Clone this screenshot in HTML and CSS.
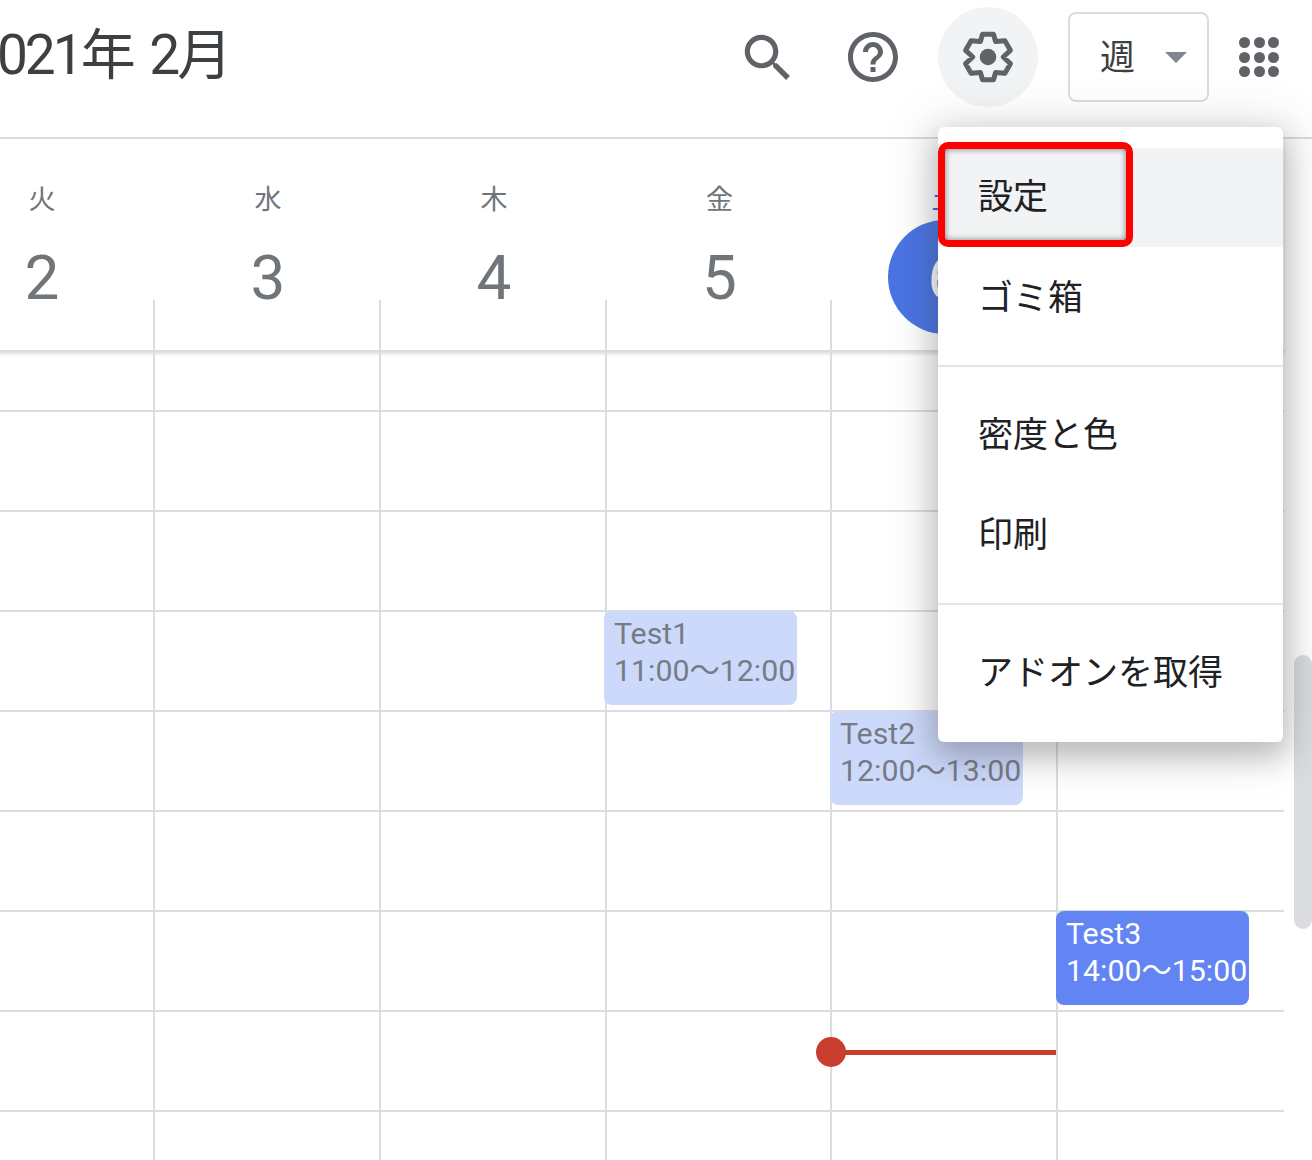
FILE: index.html
```html
<!DOCTYPE html>
<html lang="ja">
<head>
<meta charset="utf-8">
<title>カレンダー</title>
<link rel="stylesheet" href="styles.css">
</head>
<body>
<div class="page">
  <header class="topbar">
    <h1 class="title">2021年 2月</h1>
    <div class="tools">
      <button class="icon-btn"><svg class="ic-search" viewBox="0 0 24 24"><path d="M15.5 14h-.79l-.28-.27C15.41 12.59 16 11.11 16 9.5 16 5.91 13.09 3 9.5 3S3 5.91 3 9.5 5.91 16 9.5 16c1.61 0 3.09-.59 4.23-1.57l.27.28v.79l5 4.99L20.49 19l-4.99-5zm-6 0C7.01 14 5 11.99 5 9.5S7.01 5 9.5 5 14 7.01 14 9.5 11.99 14 9.5 14z"/></svg></button>
      <button class="icon-btn help"><svg class="ic-help" viewBox="0 0 24 24"><path d="M11 18h2v-2h-2v2zm1-16C6.48 2 2 6.48 2 12s4.48 10 10 10 10-4.48 10-10S17.52 2 12 2zm0 18c-4.41 0-8-3.59-8-8s3.59-8 8-8 8 3.59 8 8-3.59 8-8 8zm0-14c-2.21 0-4 1.79-4 4h2c0-1.1.9-2 2-2s2 .9 2 2c0 2-3 1.75-3 5h2c0-2.25 3-2.5 3-5 0-2.21-1.79-4-4-4z"/></svg></button>
      <button class="icon-btn gear"><svg class="ic-gear" viewBox="-30 -30 60 60"><path class="gear-ring" d="M-5.5 -22.7L5.5 -22.7L7.6 -15.4L16.9 -16.3L22.4 -6.7L15.2 0L22.4 6.7L16.9 16.3L7.6 15.4L5.5 22.7L-5.5 22.7L-7.6 15.4L-16.9 16.3L-22.4 6.7L-15.2 0L-22.4 -6.7L-16.9 -16.3L-7.6 -15.4Z"/><circle class="gear-dot" cx="0" cy="0" r="8.3"/></svg></button>
      <button class="view-btn"><span class="view-label">週</span><span class="caret"></span></button>
      <button class="icon-btn apps"><span class="dots"><i></i><i></i><i></i><i></i><i></i><i></i><i></i><i></i><i></i></span></button>
    </div>
  </header>

  <section class="week-head">
    <div class="day"><span class="dow">火</span><span class="num">2</span></div>
    <div class="day"><span class="dow">水</span><span class="num">3</span></div>
    <div class="day"><span class="dow">木</span><span class="num">4</span></div>
    <div class="day"><span class="dow">金</span><span class="num">5</span></div>
    <div class="day today"><span class="dow">土</span><span class="num">6</span></div>
    <div class="day last"><span class="dow">日</span><span class="num">7</span></div>
  </section>

  <section class="week-grid">
    <div class="cell"></div><div class="cell"></div><div class="cell"></div><div class="cell"></div><div class="cell"></div><div class="cell last"></div>
    <div class="cell"></div><div class="cell"></div><div class="cell"></div><div class="cell"></div><div class="cell"></div><div class="cell last"></div>
    <div class="cell"></div><div class="cell"></div><div class="cell"></div><div class="cell"></div><div class="cell"></div><div class="cell last"></div>
    <div class="cell"></div><div class="cell"></div><div class="cell"></div><div class="cell"><div class="event pale nudge">Test1<br>11:00〜12:00</div></div><div class="cell"></div><div class="cell last"></div>
    <div class="cell"></div><div class="cell"></div><div class="cell"></div><div class="cell"></div><div class="cell"><div class="event pale">Test2<br>12:00〜13:00</div></div><div class="cell last"></div>
    <div class="cell"></div><div class="cell"></div><div class="cell"></div><div class="cell"></div><div class="cell"></div><div class="cell last"></div>
    <div class="cell"></div><div class="cell"></div><div class="cell"></div><div class="cell"></div><div class="cell"></div><div class="cell last"><div class="event solid">Test3<br>14:00〜15:00</div></div>
    <div class="cell"></div><div class="cell"></div><div class="cell"></div><div class="cell"></div><div class="cell"><div class="now"></div></div><div class="cell last"></div>
    <div class="cell"></div><div class="cell"></div><div class="cell"></div><div class="cell"></div><div class="cell"></div><div class="cell last"></div>
  </section>

  <div class="scroll-thumb"></div>

  <nav class="menu">
    <div class="menu-group">
      <div class="menu-item hover">設定</div>
      <div class="menu-item">ゴミ箱</div>
    </div>
    <div class="menu-group">
      <div class="menu-item">密度と色</div>
      <div class="menu-item">印刷</div>
    </div>
    <div class="menu-group">
      <div class="menu-item">アドオンを取得</div>
    </div>
    <div class="callout"></div>
  </nav>
</div>
</body>
</html>
```
FILE: styles.css
```css
* { box-sizing: border-box; }
html, body { margin: 0; padding: 0; background: #fff; }
body { font-family: Roboto, "Noto Sans CJK JP", sans-serif; }

.page {
  position: relative;
  width: 1312px;
  height: 1160px;
  overflow: hidden;
}

/* top bar */
.topbar {
  height: 139px;
  border-bottom: 2px solid #dadce0;
  display: flex;
  align-items: flex-start;
  justify-content: space-between;
}
.title {
  margin: 19px 0 0 -31px;
  font-size: 55px;
  line-height: 72px;
  font-weight: 400;
  letter-spacing: -3px;
  word-spacing: 6px;
  color: #3c4043;
  white-space: nowrap;
}
.tools {
  display: flex;
  align-items: center;
  height: 100px;
  margin-top: 7px;
  padding-right: 3px;
}
.icon-btn {
  width: 100px;
  height: 100px;
  padding: 0;
  border: 0;
  border-radius: 50%;
  background: transparent;
  display: flex;
  align-items: center;
  justify-content: center;
}
.help { margin-left: 5px; }
.gear { margin-left: 15px; background: #f1f3f4; }
.ic-search { width: 62px; height: 62px; fill: #5f6368; margin-top: 2px; }
.ic-help { width: 60px; height: 60px; fill: #5f6368; }
.ic-gear { width: 60px; height: 60px; }
.gear-ring { fill: none; stroke: #5f6368; stroke-width: 5; stroke-linejoin: round; }
.gear-dot { fill: #5f6368; }
.view-btn {
  width: 141px;
  height: 90px;
  margin-left: 30px;
  padding: 0 20px 6px 30px;
  background: #fff;
  border: 2px solid #dadce0;
  border-radius: 8px;
  display: flex;
  align-items: center;
  justify-content: space-between;
}
.view-label { font-size: 35px; font-family: "Noto Sans CJK JP", sans-serif; color: #3c4043; }
.caret {
  width: 0;
  height: 0;
  margin-top: 6px;
  border-left: 11px solid transparent;
  border-right: 11px solid transparent;
  border-top: 11px solid #80868b;
}
.dots {
  display: grid;
  grid-template-columns: repeat(3, 11px);
  grid-auto-rows: 11px;
  gap: 3.5px;
}
.dots i { display: block; border-radius: 50%; background: #5f6368; }

/* day headers */
.week-head, .week-grid {
  display: grid;
  grid-template-columns: repeat(3, 226px) 225px 226px 1fr;
  width: 1355px;
  margin-left: -71px;
}
.week-head {
  height: 213px;
  border-bottom: 2px solid #dadce0;
  box-shadow: 0 2px 3px rgba(60, 64, 67, .18);
  position: relative;
}
.day {
  position: relative;
  display: flex;
  flex-direction: column;
  align-items: center;
  color: #70757a;
}
.day::after {
  content: "";
  position: absolute;
  right: 0;
  bottom: 0;
  width: 2px;
  height: 50px;
  background: #dadce0;
}
.day.last::after { display: none; }
.dow {
  margin-top: 41px;
  font-size: 27px;
  line-height: 36px;
  font-family: "Noto Sans CJK JP", sans-serif;
}
.num {
  width: 114px;
  height: 114px;
  margin-top: 4px;
  border-radius: 50%;
  display: flex;
  align-items: center;
  justify-content: center;
  font-size: 62px;
}
.today .dow { color: #3b6bd8; }
.today .num { background: #4a74e4; color: #fff; }

/* hour grid */
.week-grid { grid-template-rows: 60px; grid-auto-rows: 100px; }
.cell {
  position: relative;
  border-right: 2px solid #dadce0;
  border-bottom: 2px solid #dadce0;
}
.cell.last { border-right: 0; }

.event {
  position: absolute;
  z-index: 1;
  top: -1px;
  left: -2px;
  width: 193px;
  height: 94px;
  padding: 5px 0 0 10px;
  border-radius: 8px;
  font-size: 30.3px;
  line-height: 36.5px;
  white-space: nowrap;
  overflow: hidden;
}
.event.nudge { left: -3px; }
.event.pale { background: #cdd9fb; color: #767b85; }
.event.solid { background: #6285f3; color: #fff; }

.now {
  position: absolute;
  z-index: 1;
  top: 38px;
  left: -1px;
  width: 225px;
  height: 5px;
  background: #c83d2d;
}
.now::before {
  content: "";
  position: absolute;
  left: -15px;
  top: -13px;
  width: 30px;
  height: 30px;
  border-radius: 50%;
  background: #c83d2d;
}

.scroll-thumb {
  position: absolute;
  left: 1294px;
  top: 655px;
  width: 18px;
  height: 274px;
  border-radius: 9px;
  background: #dadce0;
}

/* settings menu */
.menu {
  position: absolute;
  z-index: 5;
  left: 938px;
  top: 127px;
  width: 345px;
  height: 615px;
  background: #fff;
  border-radius: 6px;
  box-shadow: 0 12px 28px 3px rgba(60, 64, 67, .28), 0 4px 48px 8px rgba(60, 64, 67, .15);
  display: flex;
  flex-direction: column;
}
.menu-group { padding: 18px 0; }
.menu-group + .menu-group { border-top: 2px solid #e3e4e6; }
.menu-group:first-child { padding: 21px 0 17px; }
.menu-item {
  height: 100px;
  padding: 0 0 8px 40px;
  display: flex;
  align-items: center;
  font-family: "Noto Sans CJK JP", sans-serif;
  font-size: 35px;
  color: #202124;
}
.menu-item.hover { height: 99px; margin-bottom: 1px; background: #f1f3f4; }
.callout {
  position: absolute;
  left: 0;
  top: 15px;
  width: 195px;
  height: 105px;
  border: 7px solid #f00;
  border-radius: 10px;
  box-shadow: inset 0 0 6px rgba(0, 0, 0, .5);
}
```
